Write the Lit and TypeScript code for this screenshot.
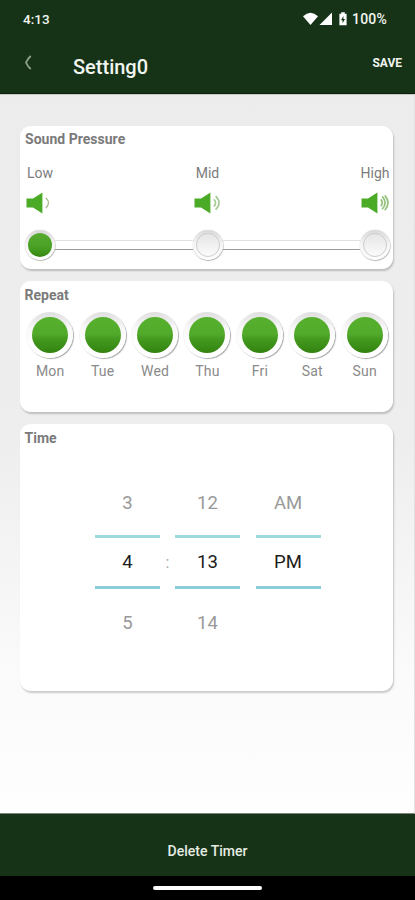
import { LitElement, html, css, svg } from "lit";
import { customElement, property } from "lit/decorators.js";

@customElement("volume-icon")
class VolumeIcon extends LitElement {
  @property({ type: Number }) level = 1;
  static styles = css`
    :host { display: block; height: 22px; }
    svg { display: block; }
  `;
  render() {
    return html`<svg width="32" height="22" viewBox="0 0 32 22">
      <path d="M1.5 6.4H8L17.4 0.4V21.4L8 15.6H1.5Z" fill="#4bab27" />
      ${this.level === 1
        ? svg`<path d="M20.8 5.8Q26.2 10.8 20.8 16" fill="none" stroke="#a9b894" stroke-width="1.3"/>`
        : this.level === 2
        ? svg`<path d="M20.8 7.2Q24.3 10.8 20.8 14.6M22.6 4.2Q29.6 10.8 22.6 17.6" fill="none" stroke="#a3c890" stroke-width="1.6"/>`
        : svg`<path d="M20.8 7.4Q23.8 10.8 20.8 14.2M22.2 4.4Q28 10.8 22.2 17.2M24.8 3.4Q31.2 10.8 24.8 18.2" fill="none" stroke="#94c27e" stroke-width="1.7"/>`}
    </svg>`;
  }
}

@customElement("app-root")
class AppRoot extends LitElement {
  static styles = css`
    :host {
      display: flex;
      flex-direction: column;
      height: 900px;
      width: 415px;
      overflow: hidden;
      font-family: Roboto, "Liberation Sans", sans-serif;
      color: #7c7c7c;
      box-sizing: border-box;
    }
    * { box-sizing: border-box; }
    .top { height: 94px; background: #163317; color: #f2f5f0; border-bottom: 1px solid #0a220b; flex: none; }
    .status { height: 38px; display: flex; align-items: center; padding: 0 28px 0 23px; font-size: 13.5px; line-height: 16px; }
    .clock { flex: 1; font-weight: 500; }
    .status svg { flex: none; margin-right: 3px; }
    .percent { font-weight: 500; font-size: 14px; letter-spacing: 0.2px; }
    .bar { height: 55px; display: flex; align-items: center; padding: 0 13px 0 24px; }
    .back { width: 49px; flex: none; padding-bottom: 7px; }
    .back svg { display: block; }
    .title { flex: 1; font-size: 20px; font-weight: 500; line-height: 24px; padding-top: 3px; }
    .save { font-size: 12px; font-weight: 700; line-height: 14px; padding-bottom: 6px; }
    .page {
      height: 720px;
      flex: none;
      padding: 32px 20px 0;
      background: linear-gradient(#ececec 0%, #eeeeee 48%, #fbfbfb 82%, #fefefe 100%);
      border-top: 1px solid #c4cbc4;
      border-right: 1px solid #e2e2e2;
      border-bottom: 1px solid #7b837b;
    }
    .card { width: 373px; background: #fff; border-radius: 11px; box-shadow: 1px 2px 2px rgba(0, 0, 0, 0.2); padding: 5px 3px 0 5px; }
    .heading { font-size: 14px; font-weight: 700; line-height: 17px; height: 17px; color: #7a7a7a; letter-spacing: 0.02px; }
    .sound { height: 143px; margin-bottom: 12px; margin-top: -1px; }
    .repeat { height: 131px; margin-bottom: 12px; padding: 6px 2px 0 4px; }
    .repeat .heading, .time .heading { padding-left: 0.5px; }
    .time { height: 267px; padding: 6px 3px 0 4px; }
    .levels { display: flex; justify-content: space-between; margin-top: 17px; }
    .level { width: 30px; display: flex; flex-direction: column; align-items: center; font-size: 14px; line-height: 17px; }
    .level volume-icon { margin-top: 10px; width: 30px; }
    .slider { display: flex; align-items: center; margin-top: 16px; }
    .track { flex: 1; height: 10px; border-top: 1px solid #e1e1e1; border-bottom: 1.5px solid #9b9b9b; }
    .knob {
      width: 30px; height: 30px; border-radius: 50%; flex: none; padding: 3px;
      background: linear-gradient(#d8d8d8, #f4f4f4 45%, #fff);
      box-shadow: 0 0 1px rgba(0, 0, 0, 0.3), 0.5px 1px 1px rgba(0, 0, 0, 0.28);
    }
    .face { height: 24px; border-radius: 50%; background: linear-gradient(#e6e6e6, #fbfbfb); }
    .knob.off .face { border: 1px solid #cdcdcd; }
    .knob.on .face { background: linear-gradient(#55aa30, #4ca226 55%, #348712); }
    .days { display: grid; grid-template-columns: repeat(7, 1fr); margin-top: 8px; }
    .day { display: flex; flex-direction: column; align-items: center; font-size: 14px; line-height: 17px; color: #8a8a8a; letter-spacing: 0.2px; }
    .ring {
      width: 46px; height: 46px; border-radius: 50%; padding: 5px; margin-bottom: 5px;
      background: linear-gradient(#dedede, #f8f8f8 35%, #fff 70%);
      box-shadow: 1px 1px 1px rgba(0, 0, 0, 0.34), -1px 0 1px rgba(0, 0, 0, 0.04);
    }
    .dot { height: 36px; border-radius: 50%; background: linear-gradient(#58b02f 0%, #52aa2a 48%, #459a20 60%, #32830f 100%); }
    .picker { display: grid; grid-template-columns: 65px 15px 65px 15.5px 65px; justify-content: start; padding-left: 71px; margin-top: 41px; font-size: 18.5px; text-align: center; }
    .cell { height: 48px; line-height: 49px; color: #999; flex: none; }
    .now { color: #1c1c1c; }
    .column { display: flex; flex-direction: column; }
    .column .cell:first-child { height: 47px; line-height: 31px; }
    .column .cell:last-child { height: 47px; line-height: 69px; }
    .rule { height: 3px; background: #9ddadd; flex: none; }
    .rule.low { background: #8accda; }
    .colon { padding-top: 51px; line-height: 47px; font-size: 16px; color: #aaa; }
    .footer { height: 62px; background: #163317; color: #e6ece4; display: flex; align-items: center; justify-content: center; font-size: 14px; font-weight: 500; padding-top: 11px; flex: none; }
    .nav { height: 24px; background: #000; display: flex; align-items: center; justify-content: center; flex: none; }
    .pill { width: 109px; height: 4px; border-radius: 2px; background: #fff; }
  `;

  private days = ["Mon", "Tue", "Wed", "Thu", "Fri", "Sat", "Sun"];
  private columns = [["3", "4", "5"], ["12", "13", "14"], ["AM", "PM", ""]];

  private column(c: string[]) {
    return html`<div class="column">
      <div class="cell">${c[0]}</div><div class="rule"></div>
      <div class="cell now">${c[1]}</div><div class="rule low"></div>
      <div class="cell">${c[2]}</div>
    </div>`;
  }

  render() {
    return html`
      <header class="top">
        <div class="status">
          <span class="clock">4:13</span>
          <svg width="46" height="14" viewBox="0 0 46 14" fill="#fff">
            <path d="M0 4.2Q7.5 -2.8 15 4.2L7.5 13Z" />
            <path d="M16.5 13L29 0.5V13Z" />
            <path d="M38.2 0.3h3.6v1.4h1.8v11.6h-7.2V1.7h1.8Z" />
            <path d="M40.4 4L38 8.2h1.6v3L42 7h-1.6Z" fill="#163317" />
          </svg>
          <span class="percent">100%</span>
        </div>
        <div class="bar">
          <div class="back">
            <svg width="9" height="15" viewBox="0 0 9 15"><path d="M6.8 1Q3.7 3.5 2 7.5Q3.7 11.5 6.8 14" fill="none" stroke="#91a58d" stroke-width="1.8" /></svg>
          </div>
          <div class="title">Setting0</div>
          <div class="save">SAVE</div>
        </div>
      </header>
      <main class="page">
        <section class="card sound">
          <div class="heading">Sound Pressure</div>
          <div class="levels">
            ${["Low", "Mid", "High"].map((t, i) => html`<div class="level">${t}<volume-icon .level=${i + 1}></volume-icon></div>`)}
          </div>
          <div class="slider">
            <div class="knob on"><div class="face"></div></div>
            <div class="track"></div>
            <div class="knob off"><div class="face"></div></div>
            <div class="track"></div>
            <div class="knob off"><div class="face"></div></div>
          </div>
        </section>
        <section class="card repeat">
          <div class="heading">Repeat</div>
          <div class="days">
            ${this.days.map((d) => html`<div class="day"><div class="ring"><div class="dot"></div></div>${d}</div>`)}
          </div>
        </section>
        <section class="card time">
          <div class="heading">Time</div>
          <div class="picker">
            ${this.column(this.columns[0])}
            <div class="colon">:</div>
            ${this.column(this.columns[1])}
            <div></div>
            ${this.column(this.columns[2])}
          </div>
        </section>
      </main>
      <footer class="footer">Delete Timer</footer>
      <div class="nav"><div class="pill"></div></div>
    `;
  }
}
